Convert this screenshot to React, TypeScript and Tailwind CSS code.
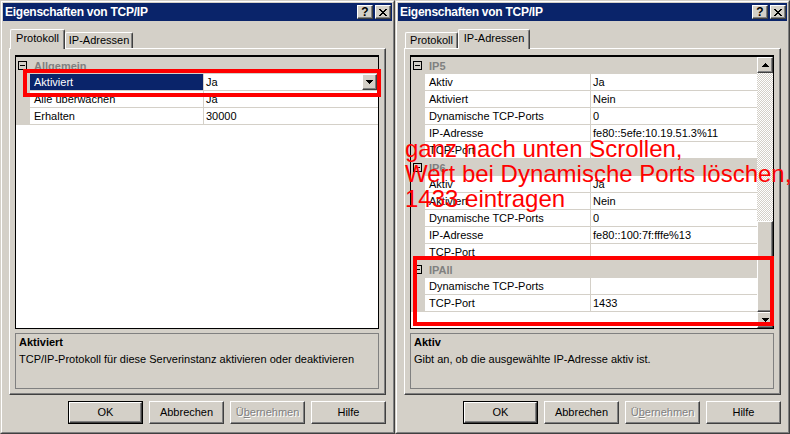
import React from 'react';

type Row = { name: string; value: string; selected?: boolean; dropdown?: boolean };
type Group = { title: string; rows: Row[] };

const raised =
  'bg-[#d4d0c8] border border-t-white border-l-white border-r-[#404040] border-b-[#404040] shadow-[inset_-1px_-1px_0_#808080]';

const protokollGroups: Group[] = [
  {
    title: 'Allgemein',
    rows: [
      { name: 'Aktiviert', value: 'Ja', selected: true, dropdown: true },
      { name: 'Alle überwachen', value: 'Ja' },
      { name: 'Erhalten', value: '30000' },
    ],
  },
];

const ipGroups: Group[] = [
  {
    title: 'IP5',
    rows: [
      { name: 'Aktiv', value: 'Ja' },
      { name: 'Aktiviert', value: 'Nein' },
      { name: 'Dynamische TCP-Ports', value: '0' },
      { name: 'IP-Adresse', value: 'fe80::5efe:10.19.51.3%11' },
      { name: 'TCP-Port', value: '' },
    ],
  },
  {
    title: 'IP6',
    rows: [
      { name: 'Aktiv', value: 'Ja' },
      { name: 'Aktiviert', value: 'Nein' },
      { name: 'Dynamische TCP-Ports', value: '0' },
      { name: 'IP-Adresse', value: 'fe80::100:7f:fffe%13' },
      { name: 'TCP-Port', value: '' },
    ],
  },
  {
    title: 'IPAll',
    rows: [
      { name: 'Dynamische TCP-Ports', value: '' },
      { name: 'TCP-Port', value: '1433' },
    ],
  },
];

function DownArrow() {
  return (
    <svg width="7" height="4" viewBox="0 0 7 4" shapeRendering="crispEdges">
      <path d="M0 0h7v1H0zM1 1h5v1H1zM2 2h3v1H2zM3 3h1v1H3z" fill="#000" />
    </svg>
  );
}

function UpArrow() {
  return (
    <svg width="7" height="4" viewBox="0 0 7 4" shapeRendering="crispEdges">
      <path d="M3 0h1v1H3zM2 1h3v1H2zM1 2h5v1H1zM0 3h7v1H0z" fill="#000" />
    </svg>
  );
}

function TitleBar() {
  return (
    <div className="h-[18px] bg-[#0a246a] flex items-center pl-[2px] pr-[1px]">
      <span className="flex-1 text-white font-bold text-[12px] leading-[14px] tracking-[-0.25px]">
        Eigenschaften von TCP/IP
      </span>
      <div className={`w-[16px] h-[14px] ${raised} flex items-center justify-center text-[12px] font-bold leading-none`}>
        ?
      </div>
      <div className={`ml-[2px] w-[16px] h-[14px] ${raised} flex items-center justify-center`}>
        <svg width="8" height="7" viewBox="0 0 8 7" shapeRendering="crispEdges">
          <path
            d="M0 0h2v1H0zM6 0h2v1H6zM1 1h2v1H1zM5 1h2v1H5zM2 2h4v1H2zM3 3h2v1H3zM2 4h4v1H2zM1 5h2v1H1zM5 5h2v1H5zM0 6h2v1H0zM6 6h2v1H6z"
            fill="#000"
          />
        </svg>
      </div>
    </div>
  );
}

function Tab({ label, active, width }: { label: string; active: boolean; width: string }) {
  if (active) {
    return (
      <div
        className={`relative z-10 -mb-px h-[20px] ${width} bg-[#d4d0c8] border-t border-l border-r border-t-white border-l-white border-r-[#404040] shadow-[inset_-1px_0_0_#808080] rounded-t-[2px] text-center pt-[2px] leading-[13px]`}
      >
        {label}
      </div>
    );
  }
  return (
    <div
      className={`h-[16px] ${width} bg-[#d4d0c8] border-t border-l border-r border-t-white border-l-white border-r-[#404040] shadow-[inset_-1px_0_0_#808080] rounded-t-[2px] text-center pt-[1px] leading-[13px]`}
    >
      {label}
    </div>
  );
}

function Header({ title }: { title: string }) {
  return (
    <div className="h-[17px] bg-[#d4d0c8] flex items-center">
      <div className="ml-[2px] w-[9px] h-[9px] border border-black flex items-center justify-center">
        <div className="w-[5px] h-px bg-black" />
      </div>
      <span className="ml-[7px] font-bold text-[#808080] leading-[16px]">{title}</span>
    </div>
  );
}

function Item({ row, nameW }: { row: Row; nameW: string }) {
  return (
    <div className="h-[17px] flex border-b border-[#d4d0c8] bg-white">
      <div className="w-[14px] bg-[#d4d0c8]" />
      <div
        className={`${nameW} border-r border-[#d4d0c8] pl-[4px] leading-[16px] whitespace-nowrap ${
          row.selected ? 'bg-[#0a246a] text-white' : ''
        }`}
      >
        {row.name}
      </div>
      <div className="flex-1 flex pl-[2px] leading-[16px] whitespace-nowrap">
        <span className="flex-1">{row.value}</span>
        {row.dropdown && (
          <div className={`mr-px w-[15px] h-[16px] ${raised} flex items-center justify-center`}>
            <DownArrow />
          </div>
        )}
      </div>
    </div>
  );
}

function PropertyGrid({ groups, nameW, scroll }: { groups: Group[]; nameW: string; scroll?: boolean }) {
  return (
    <div className="w-[364px] h-[274px] border border-t-2 border-black bg-white flex">
      <div className="flex-1 flex flex-col">
        {groups.map((g) => (
          <React.Fragment key={g.title}>
            <Header title={g.title} />
            {g.rows.map((r, i) => (
              <Item key={i} row={r} nameW={nameW} />
            ))}
          </React.Fragment>
        ))}
      </div>
      {scroll && (
        <div className="w-[16px] flex flex-col">
          <div className={`h-[16px] ${raised} flex items-center justify-center`}>
            <UpArrow />
          </div>
          <div className="h-[148px] bg-[repeating-conic-gradient(#d4d0c8_0_25%,#ffffff_0_50%)] bg-[length:2px_2px]" />
          <div className={`h-[91px] ${raised}`} />
          <div className={`h-[16px] ${raised} flex items-center justify-center`}>
            <DownArrow />
          </div>
        </div>
      )}
    </div>
  );
}

function Button({ children, isDefault }: { children: React.ReactNode; isDefault?: boolean }) {
  if (isDefault) {
    return (
      <div className="w-[75px] h-[23px] border border-black">
        <div className={`h-full ${raised} flex items-center justify-center`}>{children}</div>
      </div>
    );
  }
  return <div className={`w-[75px] h-[23px] ${raised} flex items-center justify-center`}>{children}</div>;
}

function Dialog({
  tab,
  groups,
  nameW,
  scroll,
  descTitle,
  descText,
}: {
  tab: 'protokoll' | 'ip';
  groups: Group[];
  nameW: string;
  scroll?: boolean;
  descTitle: string;
  descText: string;
}) {
  return (
    <div className="w-[395px] h-[434px] shrink-0 bg-[#d4d0c8] border border-t-[#d4d0c8] border-l-[#d4d0c8] border-r-[#404040] border-b-[#404040]">
      <div className="h-full p-px border border-t-white border-l-white border-r-[#808080] border-b-[#808080] flex flex-col">
        <TitleBar />

        <div className="mt-[8px] h-[19px] pl-[7px] flex items-end">
          {tab === 'protokoll' ? (
            <>
              <Tab label="Protokoll" active width="w-[55px]" />
              <Tab label="IP-Adressen" active={false} width="w-[68px]" />
            </>
          ) : (
            <>
              <Tab label="Protokoll" active={false} width="w-[53px]" />
              <Tab label="IP-Adressen" active width="w-[72px]" />
            </>
          )}
        </div>

        <div className="mx-[6px] h-[347px] pt-[6px] pl-[5px] border border-t-white border-l-white border-r-[#404040] border-b-[#404040] shadow-[inset_-1px_-1px_0_#808080] flex flex-col">
          <PropertyGrid groups={groups} nameW={nameW} scroll={scroll} />
          <div className="mt-[4px] w-[364px] h-[56px] border border-[#808080] pl-[3px] pt-[2px]">
            <div className="font-bold leading-[13px]">{descTitle}</div>
            <div className="mt-[4px] leading-[13px]">{descText}</div>
          </div>
        </div>

        <div className="mt-[6px] pr-[6px] flex justify-end gap-[6px]">
          <Button isDefault>OK</Button>
          <Button>Abbrechen</Button>
          <Button>
            <span className="text-[#808080] [text-shadow:1px_1px_0_#ffffff]">
              Ü<span className="underline">b</span>ernehmen
            </span>
          </Button>
          <Button>Hilfe</Button>
        </div>
      </div>
    </div>
  );
}

export default function App() {
  return (
    <div className="relative w-[790px] h-[434px] overflow-hidden flex bg-[#d4d0c8] font-['Liberation_Sans',Arial,sans-serif] text-[11px] text-black">
      <Dialog
        tab="protokoll"
        groups={protokollGroups}
        nameW="w-[174px]"
        descTitle="Aktiviert"
        descText="TCP/IP-Protokoll für diese Serverinstanz aktivieren oder deaktivieren"
      />
      <Dialog
        tab="ip"
        groups={ipGroups}
        nameW="w-[166px]"
        scroll
        descTitle="Aktiv"
        descText="Gibt an, ob die ausgewählte IP-Adresse aktiv ist."
      />

      {/* annotations */}
      <div className="absolute left-[23px] top-[69px] w-[358px] h-[28px] border-4 border-[#ff0000]" />
      <div className="absolute left-[413px] top-[256px] w-[361px] h-[70px] border-4 border-[#ff0000]" />
      <div className="absolute left-[405px] top-[136px] text-[24px] leading-[25px] text-[#ff0000] whitespace-nowrap">
        <div>ganz nach unten Scrollen,</div>
        <div>Wert bei Dynamische Ports löschen,</div>
        <div>1433 eintragen</div>
      </div>
    </div>
  );
}
